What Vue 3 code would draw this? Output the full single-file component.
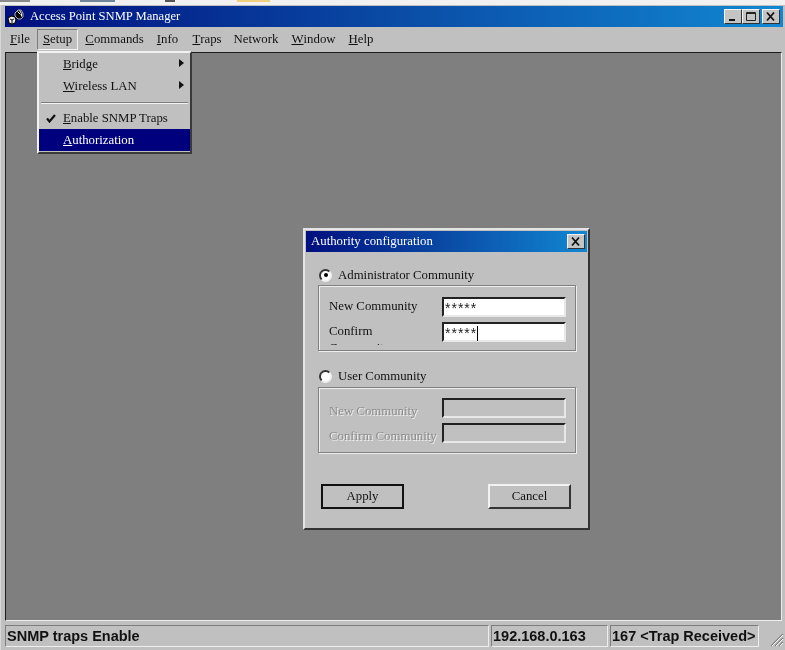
<script setup>
const menus = [
  { key: 'F', rest: 'ile', w: 34 },
  { key: 'S', rest: 'etup', w: 41, open: true },
  { key: 'C', rest: 'ommands', w: 73 },
  { key: 'I', rest: 'nfo', w: 33 },
  { key: 'T', rest: 'raps', w: 46 },
  { key: '', rest: 'Network', w: 52 },
  { key: 'W', rest: 'indow', w: 63 },
  { key: 'H', rest: 'elp', w: 32 }
]
</script>

<template>
  <div class="page">
    <div class="strip">
      <i class="s0"></i><i class="s1"></i><i class="s2"></i><i class="s3"></i>
    </div>
    <div class="window">
      <div class="titlebar">
        <svg class="appicon" width="17" height="16" viewBox="0 0 17 16">
          <path d="M1 9l3-2 4 1 1 3-1 3-3 1-3-1z" fill="#f2f2f2" stroke="#0a0a0a" stroke-width="1.2"/>
          <path d="M3 10l2 1 2-1M5 11v3" fill="none" stroke="#0a0a0a"/>
          <path d="M8 4l3-3 3 0 2 3 0 4-2 2-3 0-3-3z" fill="#0a0a0a" stroke="#d8d8d8" stroke-width="0.8"/>
          <path d="M10.500 2.500l3 3M12.500 1.500l2 3v3" fill="none" stroke="#fff" stroke-width="1"/>
        </svg>
        <span class="title">Access Point SNMP Manager</span>
        <div class="winbtns">
          <button class="cap"><svg width="12" height="11" viewBox="0 0 12 11"><path d="M2 9h6" stroke="#111" stroke-width="2"/></svg></button>
          <button class="cap"><svg width="12" height="11" viewBox="0 0 12 11"><path d="M1.500 1.500h9v8h-9z M1.500 2.500h9" fill="none" stroke="#222"/></svg></button>
          <button class="cap third"><svg width="12" height="11" viewBox="0 0 12 11"><path d="M2 1.500l7 8M9 1.500l-7 8" stroke="#111" stroke-width="1.8"/></svg></button>
        </div>
      </div>

      <div class="menubar">
        <span v-for="m in menus" :key="m.rest" class="menu" :class="{ open: m.open }" :style="{ width: m.w + 'px' }"><u>{{ m.key }}</u>{{ m.rest }}</span>
      </div>

      <div class="workspace">
        <div class="dropdown">
          <div class="item"><span class="mark"></span><span class="lbl"><u>B</u>ridge</span><span class="arrow"></span></div>
          <div class="item"><span class="mark"></span><span class="lbl"><u>W</u>ireless LAN</span><span class="arrow"></span></div>
          <div class="sep"></div>
          <div class="item">
            <span class="mark"><svg width="10" height="9" viewBox="0 0 10 9"><path d="M1 4.500l2.500 3L9 1" fill="none" stroke="#111" stroke-width="2.200"/></svg></span>
            <span class="lbl"><u>E</u>nable SNMP Traps</span>
          </div>
          <div class="item active"><span class="mark"></span><span class="lbl"><u>A</u>uthorization</span></div>
        </div>

        <div class="dialog">
          <div class="dtitle">
            <span>Authority configuration</span>
            <button class="cap dclose"><svg width="12" height="11" viewBox="0 0 12 11"><path d="M2 1.500l7 8M9 1.500l-7 8" stroke="#111" stroke-width="1.8"/></svg></button>
          </div>
          <div class="dbody">
            <div class="radio-row"><span class="radio on"></span><span>Administrator Community</span></div>
            <div class="group first">
              <div class="field">
                <span class="flabel">New Community</span>
                <span class="input">*****</span>
              </div>
              <div class="field">
                <span class="flabel clipped">Confirm Community</span>
                <span class="input">*****<i class="caret"></i></span>
              </div>
            </div>

            <div class="radio-row second"><span class="radio"></span><span>User Community</span></div>
            <div class="group disabled">
              <div class="field">
                <span class="flabel">New Community</span>
                <span class="input"></span>
              </div>
              <div class="field">
                <span class="flabel">Confirm Community</span>
                <span class="input"></span>
              </div>
            </div>

            <div class="actions">
              <button class="btn default">Apply</button>
              <button class="btn">Cancel</button>
            </div>
          </div>
        </div>
      </div>

      <div class="statusbar">
        <div class="cell grow">SNMP traps Enable</div>
        <div class="cell ip">192.168.0.163</div>
        <div class="cell traps">167 &lt;Trap Received&gt;</div>
        <svg class="grip" width="16" height="16" viewBox="0 0 16 16">
          <path d="M3 15L15 3M7 15l8-8M11 15l4-4" stroke="#7c7c7c" stroke-width="1.2" fill="none"/>
          <path d="M4 15L15 4M8 15l7-7M12 15l3-3" stroke="#f4f4f4" stroke-width="1" fill="none"/>
        </svg>
      </div>
    </div>
  </div>
</template>

<style scoped>
.page {
  width: 785px;
  height: 650px;
  background: #c0c0c0;
  font-family: "Liberation Serif", "DejaVu Serif", serif;
  font-size: 12.8px;
  color: #111;
  display: flex;
  flex-direction: column;
  overflow: hidden;
  filter: blur(0.4px);
}
.strip {
  height: 5px;
  background: #f1f1f1;
  flex: none;
  display: flex;
}
.strip i { display: block; height: 2px; }
.s0 { width: 30px; background: #8a8a8a; }
.s1 { width: 35px; margin-left: 50px; background: #6f8799; }
.s2 { width: 10px; margin-left: 50px; background: #555; }
.s3 { width: 33px; margin-left: 62px; background: #f0cf80; }
.window {
  flex: 1;
  display: flex;
  flex-direction: column;
  min-height: 0;
  padding: 0 2px 0 4px;
  border-left: 1px solid #d8d8d8;
}
.titlebar {
  height: 21px;
  flex: none;
  margin-top: 1px;
  background: linear-gradient(90deg, #000f7e 0%, #0a4ba6 50%, #1187d2 100%);
  display: flex;
  align-items: center;
  color: #fff;
  padding-right: 3px;
}
.appicon { margin-left: 2px; flex: none; }
.title { margin-left: 6px; font-size: 12.6px; white-space: nowrap; }
.winbtns { margin-left: auto; display: flex; }
.cap {
  width: 18px;
  height: 15px;
  padding: 0;
  background: #c4c4c4;
  border: 1px solid;
  border-color: #f4f4f4 #333 #333 #f4f4f4;
  display: flex;
  align-items: center;
  justify-content: center;
}
.third { margin-left: 2px; }
.menubar {
  height: 25px;
  flex: none;
  display: flex;
  align-items: center;
  margin-left: -2px;
  font-size: 12.8px;
}
.menu {
  height: 21px;
  display: flex;
  align-items: center;
  justify-content: center;
  box-sizing: border-box;
  white-space: nowrap;
}
.menu.open {
  border: 1px solid;
  border-color: #7d7d7d #f2f2f2 #f2f2f2 #7d7d7d;
}
.workspace {
  flex: 1;
  min-height: 0;
  position: relative;
  background: #7f7f7f;
  border: 1px solid;
  border-color: #1b1b1b #ededed #ededed #1b1b1b;
  margin-right: 1px;
}
.dropdown {
  position: absolute;
  left: 31px;
  top: -2px;
  width: 155px;
  height: 103px;
  box-sizing: border-box;
  background: #c0c0c0;
  border: 2px solid;
  border-color: #f2f2f2 #3a3a3a #3a3a3a #f2f2f2;
  z-index: 2;
}
.item {
  height: 22px;
  display: flex;
  align-items: center;
  position: relative;
  font-size: 12.8px;
}
.mark { width: 24px; display: flex; justify-content: flex-start; padding-left: 7px; box-sizing: border-box; }
.arrow {
  position: absolute;
  right: 6px;
  top: 6px;
  border-left: 5px solid #111;
  border-top: 4.5px solid transparent;
  border-bottom: 4.5px solid transparent;
}
.sep {
  height: 0;
  margin: 5px 2px 3px;
  border-top: 1px solid #7d7d7d;
  border-bottom: 1px solid #f2f2f2;
}
.item.active { background: #00007f; color: #fff; }
.dialog {
  position: absolute;
  left: 297px;
  top: 175px;
  width: 287px;
  height: 302px;
  box-sizing: border-box;
  background: #c0c0c0;
  border: 2px solid;
  border-color: #e4e4e4 #333 #333 #e4e4e4;
  display: flex;
  flex-direction: column;
  padding: 1px;
}
.dtitle {
  height: 21px;
  flex: none;
  background: linear-gradient(90deg, #000f7e 0%, #0a4ba6 50%, #1187d2 100%);
  color: #fff;
  display: flex;
  align-items: center;
  justify-content: space-between;
  padding: 0 2px 0 5px;
  font-size: 12.8px;
}
.dbody {
  flex: 1;
  padding: 0 17px 0 12px;
  display: flex;
  flex-direction: column;
}
.radio-row {
  height: 20px;
  margin-top: 13px;
  display: flex;
  align-items: center;
  gap: 6px;
  font-size: 12.8px;
  white-space: nowrap;
}
.radio-row.second { margin-top: 15px; }
.radio {
  width: 13px;
  height: 13px;
  box-sizing: border-box;
  border-radius: 50%;
  background: #fff;
  border: 2px solid;
  border-color: #333 #f0f0f0 #f0f0f0 #333;
  margin-left: 1px;
  position: relative;
}
.radio.on::after {
  content: "";
  position: absolute;
  left: 2.5px;
  top: 2.5px;
  width: 4px;
  height: 4px;
  border-radius: 50%;
  background: #000;
}
.group {
  width: 258px;
  height: 66px;
  box-sizing: border-box;
  border: 1px solid #808080;
  box-shadow: 1px 1px 0 #eee, inset 1px 1px 0 #eee;
  padding: 11px 0 0 10px;
  overflow: hidden;
}
.group.disabled { margin-top: 1px; padding-top: 10px; }
.field {
  height: 25px;
  display: flex;
  align-items: flex-start;
  font-size: 12.8px;
}
.flabel { width: 113px; flex: none; line-height: 17px; margin-top: 1px; white-space: nowrap; }
.clipped { white-space: normal; width: 80px; margin-right: 33px; height: 22px; overflow: hidden; }
.input {
  width: 124px;
  height: 20px;
  box-sizing: border-box;
  background: #fff;
  border: 2px solid;
  border-color: #222 #e8e8e8 #e8e8e8 #222;
  font-family: "Liberation Sans", sans-serif;
  font-size: 14px;
  line-height: 18px;
  padding-left: 1px;
  letter-spacing: 1px;
  color: #222;
}
.caret {
  display: inline-block;
  width: 1px;
  height: 15px;
  background: #000;
  vertical-align: -3px;
}
.disabled .flabel {
  color: #8c8c8c;
  text-shadow: 1px 1px 0 #f0f0f0;
  margin-top: 5px;
}
.disabled .input { background: #c0c0c0; }
.actions {
  margin-top: 31px;
  display: flex;
  justify-content: space-between;
  padding-left: 3px;
  width: 250px;
}
.btn {
  width: 83px;
  height: 25px;
  box-sizing: border-box;
  padding: 0;
  background: #c0c0c0;
  border: 2px solid;
  border-color: #f2f2f2 #333 #333 #f2f2f2;
  font: inherit;
  font-size: 12.8px;
  color: #111;
}
.btn.default {
  border-color: #111;
}
.statusbar {
  height: 29px;
  flex: none;
  display: flex;
  gap: 2px;
  padding-top: 4px;
  box-sizing: border-box;
  margin-right: -2px;
  font-family: "Liberation Sans", sans-serif;
  font-weight: 700;
  font-size: 14.5px;
  white-space: nowrap;
  position: relative;
}
.cell {
  height: 22px;
  box-sizing: border-box;
  border: 1px solid;
  border-color: #7d7d7d #eeeeee #eeeeee #7d7d7d;
  display: flex;
  align-items: center;
  padding-left: 1px;
}
.grow { width: 484px; }
.ip { width: 117px; }
.traps { width: 149px; }
.grip { position: absolute; right: 1px; bottom: 3px; }
</style>
